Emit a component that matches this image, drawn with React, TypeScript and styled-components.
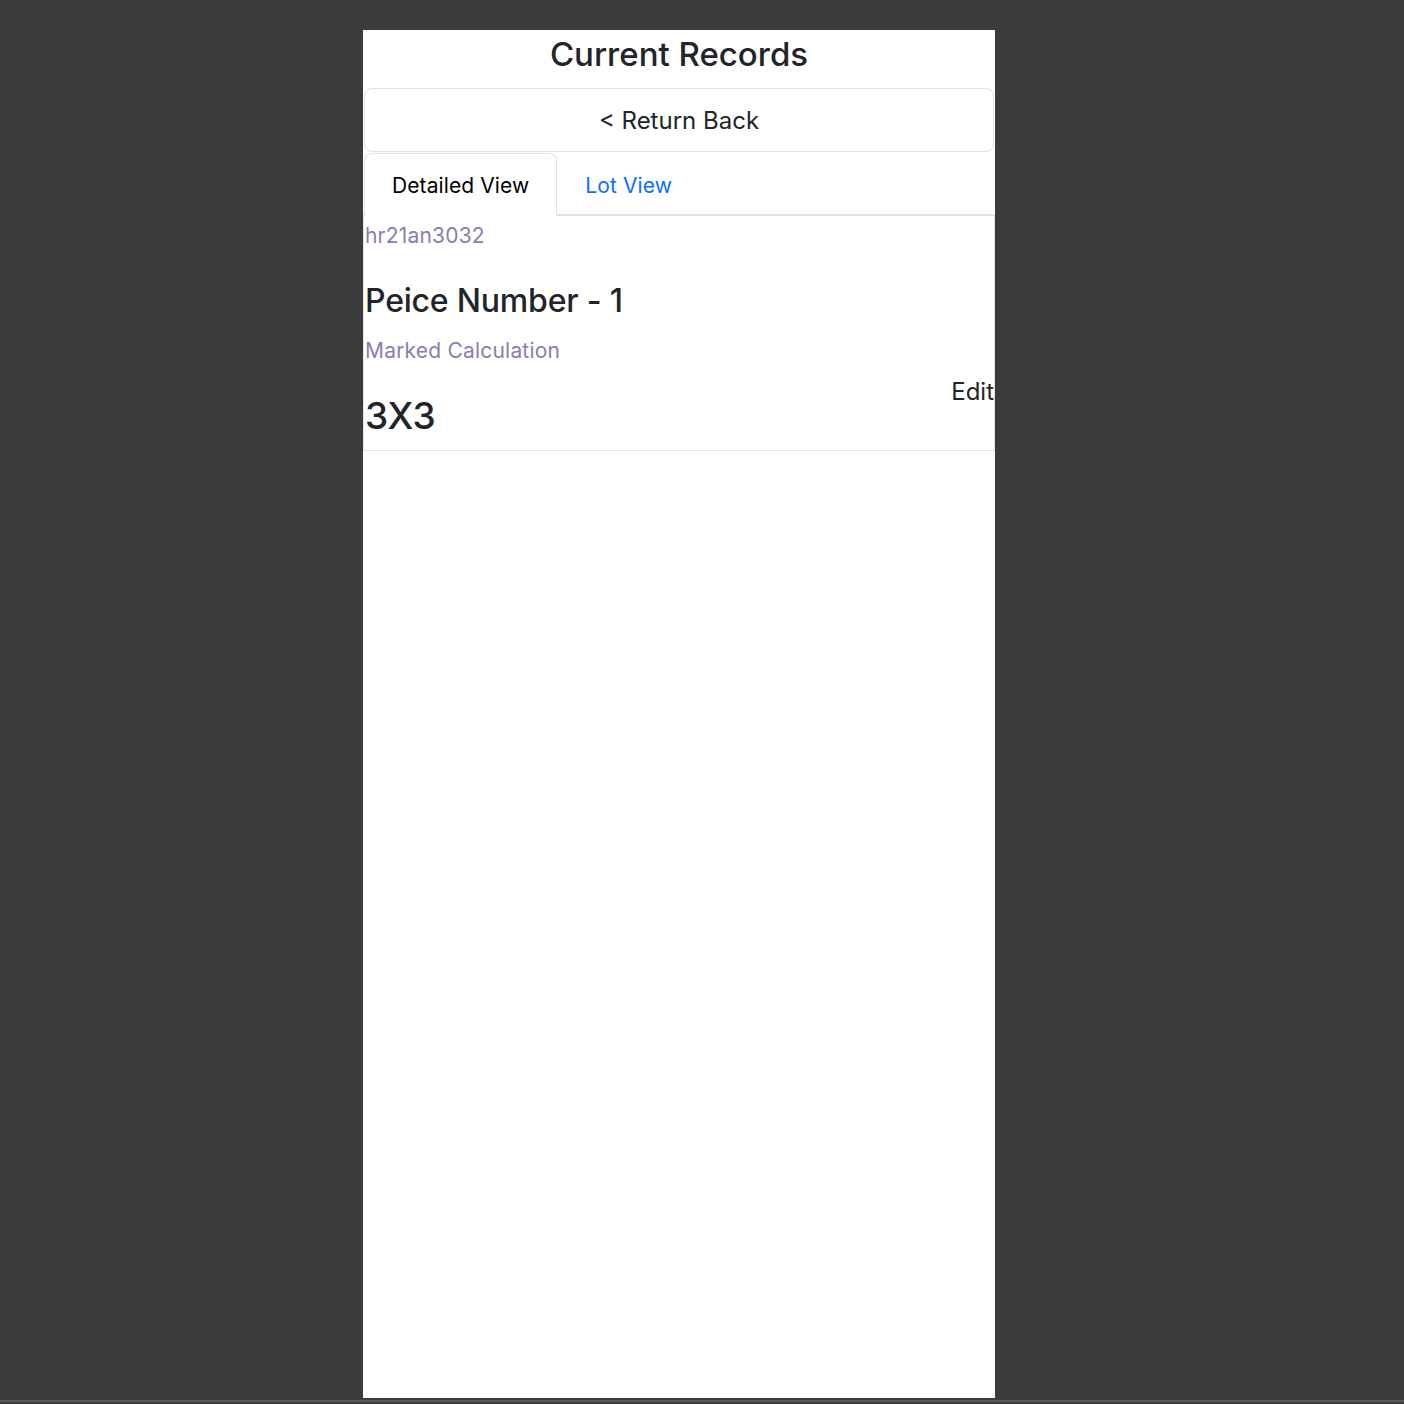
import styled, { createGlobalStyle } from "styled-components";

const GlobalStyle = createGlobalStyle`
  html, body {
    margin: 0;
    padding: 0;
    background: #3b3b3b;
  }
  body {
    font-family: Inter, "Noto Sans", "Liberation Sans", sans-serif;
    color: #212529;
  }
`;

export default function App() {
  return (
    <>
      <GlobalStyle />
      <Screen>
        <Panel>
          <Title>Current Records</Title>
          <ReturnButton>&lt; Return Back</ReturnButton>
          <Tabs>
            <Tab active>Detailed View</Tab>
            <Tab>Lot View</Tab>
          </Tabs>
          <Card>
            <Muted>hr21an3032</Muted>
            <Piece>Peice Number - 1</Piece>
            <Muted>Marked Calculation</Muted>
            <ValueRow>
              <Value>3X3</Value>
              <EditLink>Edit</EditLink>
            </ValueRow>
          </Card>
        </Panel>
      </Screen>
    </>
  );
}

const Screen = styled.div`
  min-height: 1402px;
  padding: 30px 0 0 363px;
  box-sizing: border-box;
  border-bottom: 2px solid #5a5a5a;
`;

const Panel = styled.div`
  width: 632px;
  height: 1368px;
  background: #ffffff;
  display: flex;
  flex-direction: column;
`;

const Title = styled.h2`
  margin: 0;
  padding-top: 5px;
  height: 54px;
  box-sizing: border-box;
  font-size: 33px;
  font-weight: 500;
  line-height: 38px;
  text-align: center;
`;

const ReturnButton = styled.button`
  margin: 4px 1px 1px;
  height: 64px;
  padding-top: 2px;
  border: 1px solid #dee2e6;
  border-radius: 8px;
  background: #ffffff;
  font-family: inherit;
  font-size: 24px;
  color: #212529;
  cursor: pointer;
`;

const Tabs = styled.div`
  display: flex;
  padding-left: 1px;
  border-bottom: 2px solid #dee2e6;
`;

const Tab = styled.div<{ active?: boolean }>`
  height: 63px;
  box-sizing: border-box;
  padding: 2px 27px 0;
  display: flex;
  align-items: center;
  font-size: 21px;
  letter-spacing: 0.1px;
  margin-bottom: -2px;
  border: 1px solid transparent;
  border-radius: 8px 8px 0 0;
  color: #0d6efd;
  cursor: pointer;

  ${(p) =>
    p.active &&
    `
    color: #000000;
    background: #ffffff;
    border-color: #dee2e6 #dee2e6 #ffffff;
  `}
`;

const Card = styled.div`
  border: 1px solid #e3e3e3;
  border-top: none;
  height: 235px;
  box-sizing: border-box;
  padding: 5px 0 0 1px;
  display: flex;
  flex-direction: column;
`;

const Muted = styled.div`
  font-size: 21px;
  letter-spacing: 0.2px;
  line-height: 30px;
  color: #8580b2;
`;

const Piece = styled.div`
  margin: 30px 0 15px;
  font-size: 32px;
  font-weight: 500;
  line-height: 40px;
  letter-spacing: -0.2px;
`;

const ValueRow = styled.div`
  display: flex;
  justify-content: space-between;
  align-items: flex-start;
  margin-top: 10px;
`;

const Value = styled.div`
  margin-top: 16px;
  font-size: 37px;
  font-weight: 500;
  line-height: 48px;
`;

const EditLink = styled.div`
  font-size: 24px;
  line-height: 32px;
  color: #212529;
  cursor: pointer;
`;
